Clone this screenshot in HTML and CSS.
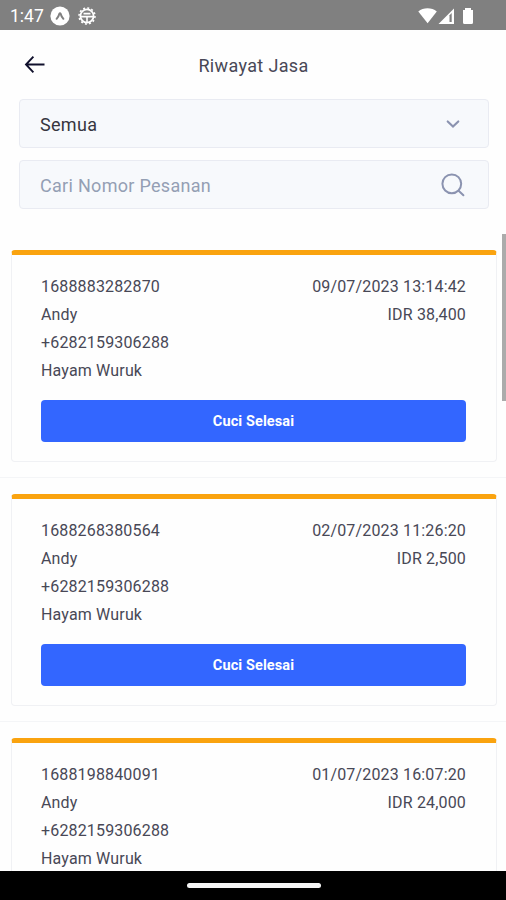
FILE: index.html
```html
<!DOCTYPE html>
<html lang="id">
<head>
<meta charset="utf-8">
<title>Riwayat Jasa</title>
<link rel="stylesheet" href="styles.css">
</head>
<body>
<div class="status-bar">
  <span class="clock">1:47</span>
  <svg class="app-icon" width="20" height="20" viewBox="0 0 20 20"><circle cx="10" cy="10" r="9.6" fill="#fff"/><path d="M6.6 12.8 Q8.8 10.3 9.4 7.8 Q10 6.6 10.6 7.8 Q11.2 10.3 13.4 12.8" fill="none" stroke="#808080" stroke-width="2" stroke-linecap="round"/></svg>
  <svg class="app-icon wheel" width="18" height="18" viewBox="0 0 18 18" fill="none" stroke="#fff"><circle cx="9" cy="9" r="6.6" stroke-width="1.8"/><circle cx="9" cy="9" r="8" stroke-width="1.5" stroke-dasharray="2 2.19"/><path d="M2.5 9.6H15.5M9 9V16M5.5 6.6H12.5" stroke-width="1.6"/></svg>
  <svg class="signals" width="56" height="18" viewBox="0 0 56 18"><path d="M.3 4.6C5.2.2 13.8.2 18.8 4.6L9.6 16.3Z" fill="#fff"/><path d="M20.5 17 36 1.5V17Z" fill="#fff"/><path d="M31.5 8.2 33.7 6V15H31.5Z" fill="#808080"/><path d="M45 3H47V1H53V3H55V15.5Q55 17 53.5 17H46.5Q45 17 45 15.5Z" fill="#fff"/></svg>
</div>
<header class="header">
  <svg width="22" height="20" viewBox="0 0 22 20" fill="none" stroke="#10102c" stroke-width="1.9"><path d="M20.5 9.5H2.3M9.4 1.6 2 9.5l7.4 7.9"/></svg>
  <h1>Riwayat Jasa</h1>
</header>
<div class="filters">
  <div class="field"><span>Semua</span><svg width="24" height="24" viewBox="0 0 24 24" fill="none" stroke="#8b93b0" stroke-width="2.1" stroke-linecap="round"><path d="m6.7 9.4 5.3 5.2 5.3-5.2"/></svg></div>
  <div class="field placeholder"><span>Cari Nomor Pesanan</span><svg width="24" height="24" viewBox="0 0 24 24" fill="none" stroke="#8b93b0" stroke-width="2" stroke-linecap="round"><circle cx="10.8" cy="10.8" r="9.4"/><path d="m17.6 17.7 4.8 4.6"/></svg></div>
</div>
<main class="list">
  <div class="scrollbar"></div>
  <div class="item"><article class="card">
    <div class="row"><span>1688883282870</span><span>09/07/2023 13:14:42</span></div>
    <div class="row"><span>Andy</span><span>IDR 38,400</span></div>
    <div class="row">+6282159306288</div>
    <div class="row">Hayam Wuruk</div>
    <button>Cuci Selesai</button>
  </article></div>
  <div class="item"><article class="card">
    <div class="row"><span>1688268380564</span><span>02/07/2023 11:26:20</span></div>
    <div class="row"><span>Andy</span><span>IDR 2,500</span></div>
    <div class="row">+6282159306288</div>
    <div class="row">Hayam Wuruk</div>
    <button>Cuci Selesai</button>
  </article></div>
  <div class="item"><article class="card">
    <div class="row"><span>1688198840091</span><span>01/07/2023 16:07:20</span></div>
    <div class="row"><span>Andy</span><span>IDR 24,000</span></div>
    <div class="row">+6282159306288</div>
    <div class="row">Hayam Wuruk</div>
  </article></div>
</main>
<footer class="nav-bar"><div class="handle"></div></footer>
</body>
</html>
```
FILE: styles.css
```css
* { box-sizing: border-box; }
body {
  margin: 0;
  height: 900px;
  display: flex;
  flex-direction: column;
  overflow: hidden;
  background: #fefefe;
  color: #484856;
  font-family: Roboto, "Liberation Sans", sans-serif;
  font-size: 16px;
}
.status-bar {
  height: 30px;
  flex: none;
  display: flex;
  align-items: center;
  padding: 1px 33px 0 10px;
  background: #808080;
  color: #fff;
}
.clock { font-size: 17.5px; width: 40px; white-space: nowrap; }
.app-icon { flex: none; }
.wheel { margin-left: 8px; }
.signals { margin-left: auto; margin-right: -1px; }
.header {
  height: 69px;
  flex: none;
  display: grid;
  grid-template-columns: 22px 1fr 22px;
  align-items: center;
  padding: 0 23px 0 24px;
}
h1 {
  margin: 2px 0 0;
  text-align: center;
  font-size: 18px;
  font-weight: 400;
  letter-spacing: 0.35px;
}
.filters {
  flex: none;
  display: flex;
  flex-direction: column;
  gap: 12px;
  padding: 0 17px 0 19px;
}
.field {
  height: 49px;
  display: flex;
  align-items: center;
  justify-content: space-between;
  padding: 1px 23px 0 20px;
  border: 1px solid #e9ebf2;
  border-radius: 4px;
  background: #f7f9fc;
  color: #36363f;
  font-size: 18px;
  letter-spacing: 0.3px;
}
.placeholder { color: #949fb4; }
.list {
  position: relative;
  flex: 1;
  min-height: 0;
  margin-top: 25px;
  overflow: hidden;
}
.scrollbar {
  position: absolute;
  top: 0;
  right: 0;
  width: 4px;
  height: 167px;
  background: #ababab;
}
.item {
  height: 244px;
  padding: 16px 9px 0 11px;
  border-bottom: 1px solid #f4f5f7;
}
.card {
  height: 212px;
  padding: 17.5px 30px 0 29px;
  border: 1px solid #f0f1f4;
  border-top: 5px solid #faa30f;
  border-radius: 4px;
}
.row {
  height: 28px;
  display: flex;
  align-items: center;
  justify-content: space-between;
  letter-spacing: 0.16px;
}
button {
  display: block;
  width: 100%;
  height: 42px;
  margin-top: 15px;
  padding: 2px 0 0;
  border: 0;
  border-radius: 4px;
  background: #3366ff;
  color: #fff;
  font: 700 14.5px Roboto, sans-serif;
  letter-spacing: 0.1px;
}
.nav-bar {
  height: 29px;
  flex: none;
  display: flex;
  justify-content: center;
  padding: 12px 0 0 1px;
  background: #000;
}
.handle {
  width: 134px;
  height: 5px;
  border-radius: 3px;
  background: #f5f5f5;
}
```
